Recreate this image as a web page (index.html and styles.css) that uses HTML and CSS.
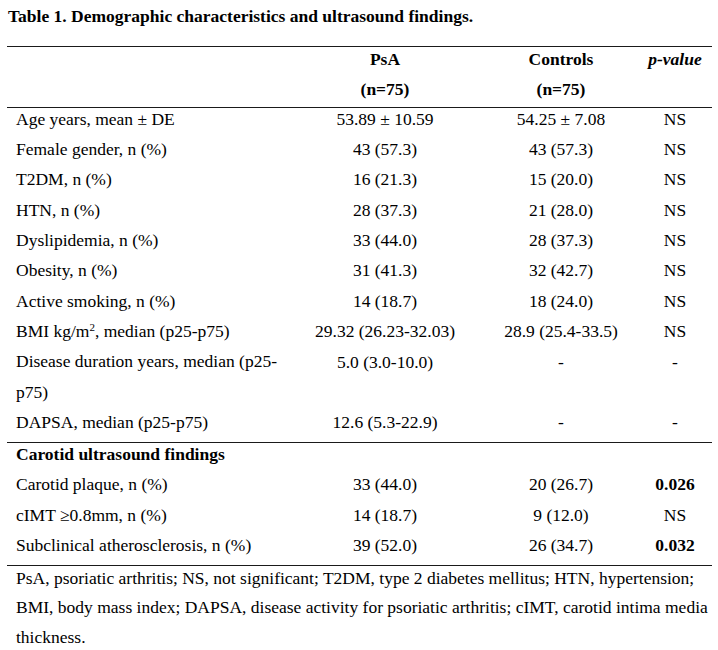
FILE: index.html
```html
<!DOCTYPE html>
<html lang="en">
<head>
<meta charset="utf-8">
<title>Table 1</title>
<link rel="stylesheet" href="styles.css">
</head>
<body>
<div class="page">
  <h1 class="title">Table 1. Demographic characteristics and ultrasound findings.</h1>
  <table class="data">
    <colgroup>
      <col class="c-label"><col class="c-psa"><col class="c-ctl"><col class="c-p">
    </colgroup>
    <thead>
      <tr>
        <th></th><th class="num">PsA</th><th class="num">Controls</th><th class="num pv">p-value</th>
      </tr>
      <tr>
        <th></th><th class="num">(n=75)</th><th class="num">(n=75)</th><th></th>
      </tr>
    </thead>
    <tbody class="grp">
      <tr><td>Age years, mean ± DE</td><td class="num">53.89 ± 10.59</td><td class="num">54.25 ± 7.08</td><td class="num">NS</td></tr>
      <tr><td>Female gender, n (%)</td><td class="num">43 (57.3)</td><td class="num">43 (57.3)</td><td class="num">NS</td></tr>
      <tr><td>T2DM, n (%)</td><td class="num">16 (21.3)</td><td class="num">15 (20.0)</td><td class="num">NS</td></tr>
      <tr><td>HTN, n (%)</td><td class="num">28 (37.3)</td><td class="num">21 (28.0)</td><td class="num">NS</td></tr>
      <tr><td>Dyslipidemia, n (%)</td><td class="num">33 (44.0)</td><td class="num">28 (37.3)</td><td class="num">NS</td></tr>
      <tr><td>Obesity, n (%)</td><td class="num">31 (41.3)</td><td class="num">32 (42.7)</td><td class="num">NS</td></tr>
      <tr><td>Active smoking, n (%)</td><td class="num">14 (18.7)</td><td class="num">18 (24.0)</td><td class="num">NS</td></tr>
      <tr><td>BMI kg/m<sup>2</sup>, median (p25-p75)</td><td class="num">29.32 (26.23-32.03)</td><td class="num">28.9 (25.4-33.5)</td><td class="num">NS</td></tr>
      <tr><td><div class="wrap">Disease duration years, median (p25-p75)</div></td><td class="num">5.0 (3.0-10.0)</td><td class="num">-</td><td class="num">-</td></tr>
      <tr><td>DAPSA, median (p25-p75)</td><td class="num">12.6 (5.3-22.9)</td><td class="num">-</td><td class="num">-</td></tr>
    </tbody>
    <tbody class="grp">
      <tr><td class="sub">Carotid ultrasound findings</td><td></td><td></td><td></td></tr>
      <tr><td>Carotid plaque, n (%)</td><td class="num">33 (44.0)</td><td class="num">20 (26.7)</td><td class="num sig">0.026</td></tr>
      <tr><td>cIMT ≥0.8mm, n (%)</td><td class="num">14 (18.7)</td><td class="num">9 (12.0)</td><td class="num">NS</td></tr>
      <tr><td>Subclinical atherosclerosis, n (%)</td><td class="num">39 (52.0)</td><td class="num">26 (34.7)</td><td class="num sig">0.032</td></tr>
    </tbody>
  </table>
  <p class="note">PsA, psoriatic arthritis; NS, not significant; T2DM, type 2 diabetes mellitus; HTN, hypertension; BMI, body mass index; DAPSA, disease activity for psoriatic arthritis; cIMT, carotid intima media thickness.</p>
</div>
</body>
</html>
```

FILE: styles.css
```css
html, body {
  margin: 0;
  padding: 0;
  background: #ffffff;
}

body {
  font-family: "Liberation Serif", "Times New Roman", serif;
  font-size: 17.5px;
  color: #000000;
}

.page {
  padding: 6px 0 0 7px;
  width: 705px;
}

.title {
  font-size: 17.5px;
  font-weight: bold;
  line-height: 20px;
  margin: 0 0 20px 1px;
}

.data {
  width: 705px;
  border-collapse: collapse;
  table-layout: fixed;
  border-top: 1px solid #1a1a1a;
}

.c-label { width: 279px; }
.c-psa { width: 198px; }
.c-ctl { width: 154px; }
.c-p { width: 74px; }

.data th,
.data td {
  line-height: 20px;
  padding: 0.5px 0 9.9px 9px;
  text-align: left;
  vertical-align: top;
  font-weight: normal;
}

.data th {
  font-weight: bold;
  padding-top: 2px;
  padding-bottom: 8px;
}

.data .num {
  text-align: center;
  padding-left: 0;
}

.data th.pv {
  font-style: italic;
}

thead {
  border-bottom: 1px solid #1a1a1a;
}

.grp + .grp {
  border-top: 1px solid #1a1a1a;
}

.grp:last-child {
  border-bottom: 1px solid #1a1a1a;
}

.data td.sub {
  font-weight: bold;
}

.data td.sig {
  font-weight: bold;
}

sup {
  font-size: 11px;
  line-height: 0;
  vertical-align: 6px;
}

.wrap {
  line-height: 30.4px;
  margin: -5.2px 0 -5.2px;
}

.note {
  margin: -2px 0 0 9px;
  width: 700px;
  line-height: 29.5px;
}
```
